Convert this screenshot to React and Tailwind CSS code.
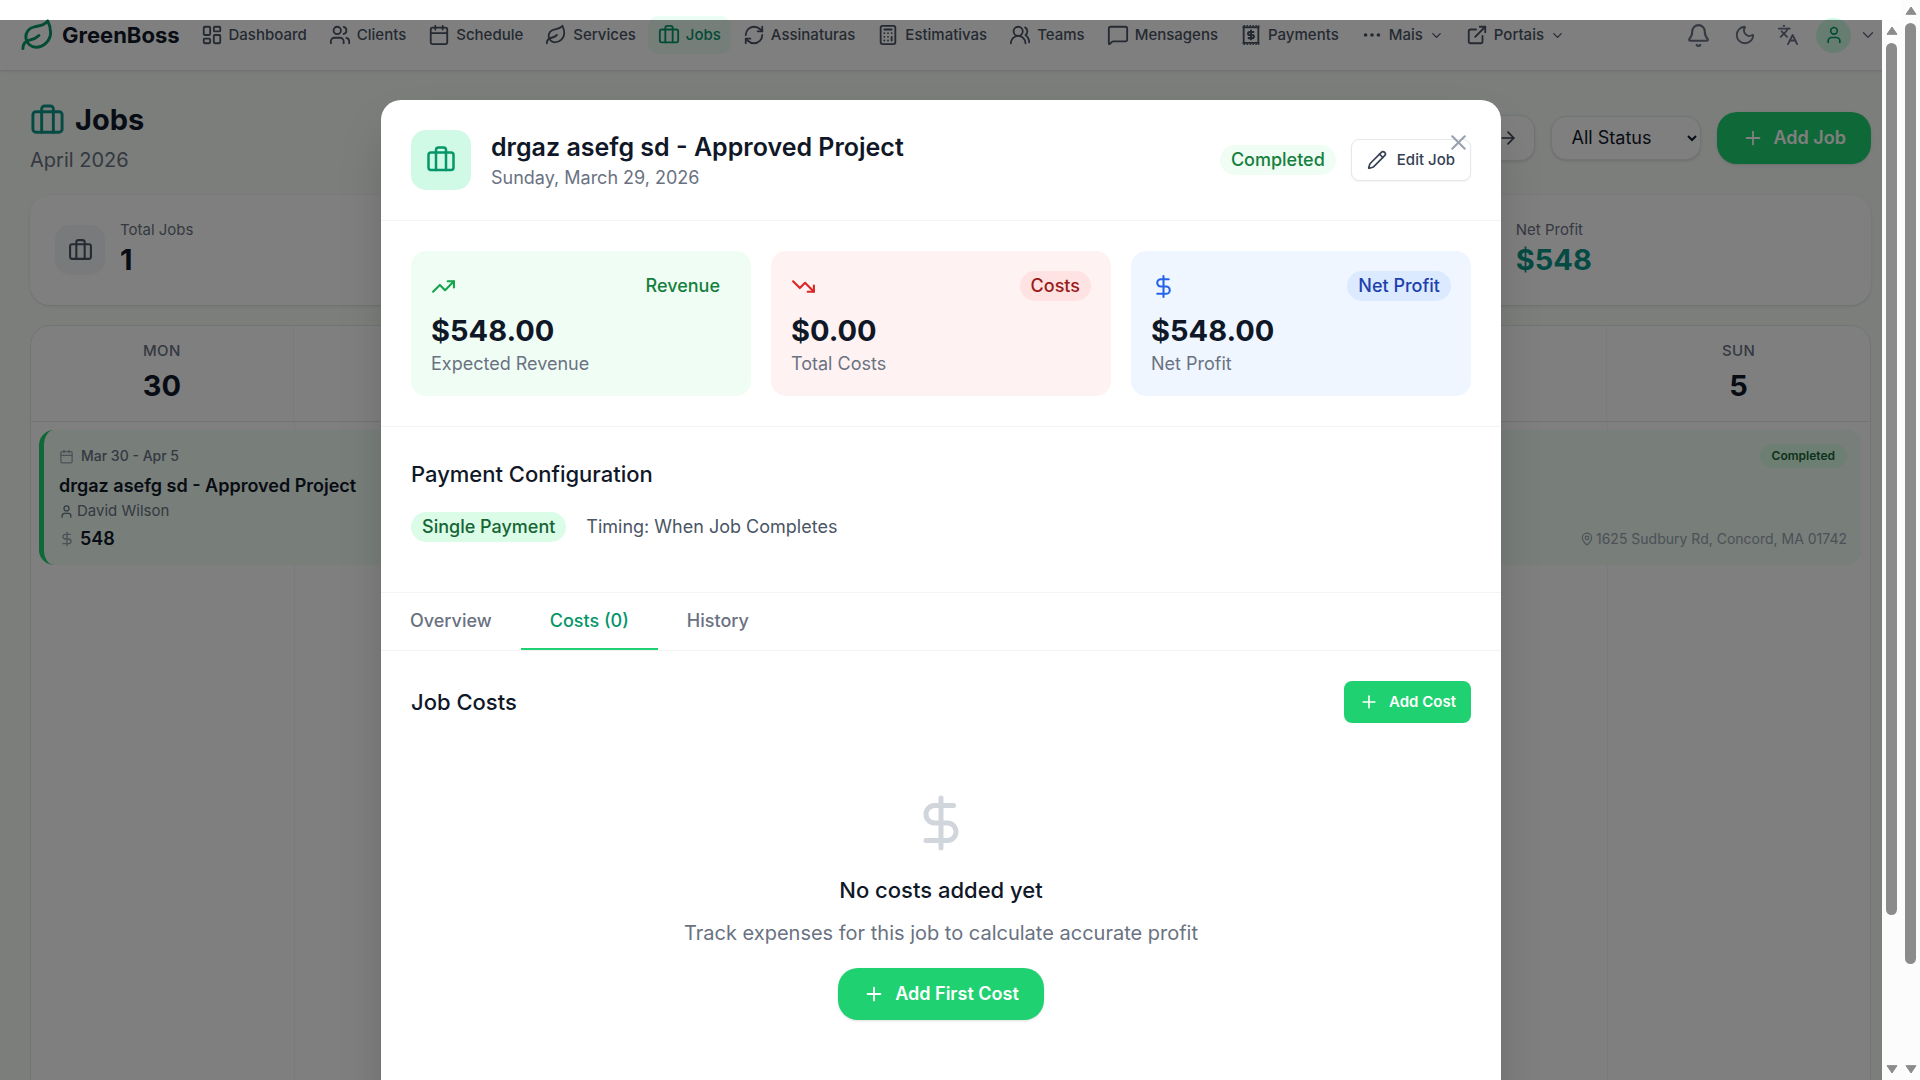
import React from 'react';
import {
	ArrowRight, Bell, Briefcase, Calculator, Calendar, ChevronDown, DollarSign, Ellipsis, ExternalLink,
	Languages, LayoutDashboard, Leaf, MapPin, MessageSquare, Moon, Pencil, Plus, RefreshCw,
	TrendingDown, TrendingUp, User, Users, UsersRound, X,
} from 'lucide-react';

// receipt with perforated top and bottom edges
function ReceiptIcon({ className }) {
	return (
		<svg viewBox="0 0 24 24" className={className} fill="none" stroke="currentColor" strokeWidth="2">
			<path d="M4 2v20M20 2v20" />
			<path d="M3 3.5h18M3 20.5h18" />
			<path d="M4 1.8h17M4 22.2h17" strokeDasharray="1.6 1.6" strokeWidth="1.6" />
			<path d="M15.5 8.6h-5a1.7 1.7 0 0 0 0 3.4h3a1.7 1.7 0 0 1 0 3.4h-5M12 6.4v11.2" strokeWidth="2.2" />
		</svg>
	);
}

const navItems = [
	{ label: 'Dashboard', icon: LayoutDashboard },
	{ label: 'Clients', icon: Users },
	{ label: 'Schedule', icon: Calendar },
	{ label: 'Services', icon: Leaf },
	{ label: 'Jobs', icon: Briefcase, active: true },
	{ label: 'Assinaturas', icon: RefreshCw },
	{ label: 'Estimativas', icon: Calculator },
	{ label: 'Teams', icon: UsersRound },
	{ label: 'Mensagens', icon: MessageSquare },
	{ label: 'Payments', icon: ReceiptIcon },
	{ label: 'Mais', icon: Ellipsis, menu: true },
	{ label: 'Portais', icon: ExternalLink, menu: true },
];

const days = [{ name: 'Mon', date: 30 }, {}, {}, {}, {}, {}, { name: 'Sun', date: 5 }];

const totals = [
	{ badge: 'Revenue', value: '$548.00', label: 'Expected Revenue', icon: TrendingUp, card: 'bg-green-50', iconColor: 'text-[#16a34a]', badgeColor: 'bg-green-50 text-[#15803d]' },
	{ badge: 'Costs', value: '$0.00', label: 'Total Costs', icon: TrendingDown, card: 'bg-red-50', iconColor: 'text-[#dc2626]', badgeColor: 'bg-red-100 text-[#991b1b]' },
	{ badge: 'Net Profit', value: '$548.00', label: 'Net Profit', icon: DollarSign, card: 'bg-blue-50', iconColor: 'text-[#2563eb]', badgeColor: 'bg-blue-100 text-[#1e40af]' },
];

const tabs = ['Overview', 'Costs (0)', 'History'];

function Badge({ className, children }) {
	return (
		<span className={`inline-flex h-7.5 items-center rounded-full px-[11px] text-lg font-medium ${className}`}>
			{children}
		</span>
	);
}

function NavLink({ item }) {
	const Icon = item.icon;
	const color = item.active ? 'bg-emerald-50 text-[#059669]' : 'text-gray-600';
	const style = `flex h-9.5 items-center gap-1.5 rounded-[10px] px-2.5 text-[15px] font-medium ${color}`;
	const content = (
		<>
			<Icon className="size-5.5" />
			{item.label}
			{item.menu && <ChevronDown className="size-[15px]" />}
		</>
	);

	if (item.menu) return <button type="button" className={style}>{content}</button>;
	return <a href="#" className={style}>{content}</a>;
}

function TopBar() {
	return (
		<header className="flex h-[70px] shrink-0 items-center gap-[11px] bg-white px-5 shadow-sm">
			<a href="#" className="flex items-center gap-[7px] text-[22px] font-bold text-gray-900">
				<Leaf className="size-[35px] text-[#059669]" />
				GreenBoss
			</a>
			<nav className="flex flex-1 items-center gap-0.5">
				{navItems.map(item => <NavLink key={item.label} item={item} />)}
			</nav>
			<div className="flex items-center gap-[5px] text-gray-500">
				<button type="button" aria-label="Notifications" className="p-2.5"><Bell className="size-[25px]" /></button>
				<button type="button" aria-label="Dark mode" className="p-2"><Moon className="size-5.5" /></button>
				<button type="button" aria-label="Language" className="p-2"><Languages className="size-5.5" /></button>
				<button type="button" aria-label="Account" className="flex items-center gap-2 p-1">
					<span className="flex size-[35px] items-center justify-center rounded-full bg-emerald-100 text-[#059669]">
						<User className="size-5" />
					</span>
					<ChevronDown className="size-[18px]" />
				</button>
			</div>
		</header>
	);
}

function PrimaryButton({ children }) {
	return (
		<button type="button" className="inline-flex h-13 items-center gap-2.5 rounded-[20px] bg-[#1fd170] px-[25px] text-lg font-semibold text-white shadow-sm">
			<Plus className="size-5.5" />
			{children}
		</button>
	);
}

function PageHeading() {
	return (
		<div className="flex items-center justify-between">
			<div>
				<h1 className="flex items-center gap-2.5 text-[29px] leading-10 font-bold text-gray-900">
					<Briefcase className="size-[35px] text-[#0d9488]" />
					Jobs
				</h1>
				<p className="mt-[5px] text-xl leading-7.5 text-gray-500">April 2026</p>
			</div>
			<div className="flex items-center gap-4">
				<button type="button" aria-label="Next week" className="flex h-11.5 w-28 items-center justify-end rounded-[15px] border border-gray-200 bg-white px-4 text-gray-700 shadow-sm">
					<ArrowRight className="size-5" />
				</button>
				<select aria-label="Status" className="h-11 w-[150px] rounded-[15px] border border-gray-200 bg-white pl-4 text-lg text-gray-900 shadow-sm">
					<option>All Status</option>
				</select>
				<PrimaryButton>Add Job</PrimaryButton>
			</div>
		</div>
	);
}

function Stat({ icon: Icon, label, value, className }) {
	return (
		<div className={`flex items-center gap-[15px] ${className}`}>
			<div className="flex size-[50px] items-center justify-center rounded-[15px] bg-gray-100 text-gray-600">
				<Icon className="size-[25px]" />
			</div>
			<div>
				<p className="text-[15px] leading-5 text-gray-500">{label}</p>
				<p className="text-[29px] leading-10 font-bold">{value}</p>
			</div>
		</div>
	);
}

function JobCard() {
	return (
		<article className="m-2 rounded-[15px] border-l-[5px] border-[#1fd170] bg-green-50 px-[15px] py-3.5">
			<div className="flex items-center justify-between">
				<p className="flex items-center gap-[7px] text-sm font-medium text-gray-500">
					<Calendar className="size-[15px] text-gray-400" />
					Mar 30 - Apr 5
				</p>
				<span className="rounded-full bg-green-100 px-3 py-0.5 text-xs leading-5 font-semibold text-[#166534]">Completed</span>
			</div>
			<h2 className="mt-[5px] text-lg leading-[25px] font-semibold text-gray-900">drgaz asefg sd - Approved Project</h2>
			<p className="mt-[3px] flex items-center gap-[3px] text-[15px] leading-5 text-gray-500">
				<User className="size-[15px]" />
				David Wilson
			</p>
			<div className="mt-[5px] flex items-center justify-between leading-[25px]">
				<p className="flex items-center gap-[5px] text-lg leading-[25px] font-semibold text-gray-900">
					<DollarSign className="size-4 text-gray-400" />
					548
				</p>
				<p className="flex items-center gap-0.5 text-sm text-gray-400">
					<MapPin className="size-3.5" />
					1625 Sudbury Rd, Concord, MA 01742
				</p>
			</div>
		</article>
	);
}

function WeekCalendar() {
	return (
		<section className="flex min-h-[800px] flex-1 flex-col rounded-[20px] border border-gray-200 bg-white">
			<div className="grid grid-cols-7 border-b border-gray-200">
				{days.map((day, i) => (
					<div key={i} className="border-r border-gray-100 p-[15px] text-center last:border-r-0">
						<p className="text-[15px] leading-5 font-medium tracking-wide text-gray-500 uppercase">{day.name}</p>
						<p className="mt-[5px] text-[29px] leading-10 font-bold text-gray-900">{day.date}</p>
					</div>
				))}
			</div>
			<div className="grid flex-1">
				<div className="col-start-1 row-start-1 grid grid-cols-7">
					{days.map((day, i) => (
						<div key={i} className="border-l border-gray-100 first:border-l-0" />
					))}
				</div>
				<div className="col-start-1 row-start-1">
					<JobCard />
				</div>
			</div>
		</section>
	);
}

function JobModal() {
	return (
		<div role="dialog" aria-label="Job details" className="relative w-full max-w-[1120px] self-start rounded-[20px] bg-white shadow-2xl">
			<div className="flex items-center gap-5 border-b border-gray-100 p-7.5">
				<div className="flex size-15 items-center justify-center rounded-[15px] bg-emerald-100">
					<Briefcase className="size-7.5 text-[#059669]" />
				</div>
				<div className="flex-1">
					<h2 className="text-[25px] leading-[35px] font-semibold text-gray-900">drgaz asefg sd - Approved Project</h2>
					<p className="text-lg leading-[25px] text-gray-500">Sunday, March 29, 2026</p>
				</div>
				<div className="flex items-center gap-[15px]">
					<Badge className="bg-green-50 text-[#15803d]">Completed</Badge>
					<button type="button" className="flex h-10.5 items-center gap-2.5 rounded-lg border border-gray-200 bg-white px-[15px] text-[15px] font-medium text-gray-700 shadow-xs">
						<Pencil className="size-5" />
						Edit Job
					</button>
				</div>
				<button type="button" aria-label="Close" className="absolute top-7.5 right-7.5 text-gray-400">
					<X className="size-[25px]" />
				</button>
			</div>

			<div className="grid grid-cols-3 gap-5 border-b border-gray-100 p-7.5">
				{totals.map(({ icon: Icon, ...total }) => (
					<div key={total.badge} className={`rounded-[15px] p-5 ${total.card}`}>
						<div className="mb-2.5 flex items-center justify-between">
							<Icon className={`size-[25px] ${total.iconColor}`} />
							<Badge className={total.badgeColor}>{total.badge}</Badge>
						</div>
						<p className="text-[29px] leading-10 font-bold text-gray-900">{total.value}</p>
						<p className="text-lg leading-[25px] text-gray-500">{total.label}</p>
					</div>
				))}
			</div>

			<div className="border-b border-gray-100 p-7.5">
				<h3 className="mb-5 text-[22px] leading-[35px] font-medium text-gray-900">Payment Configuration</h3>
				<div className="mb-5 flex items-center gap-5">
					<Badge className="bg-green-100 text-[#166534]">Single Payment</Badge>
					<span className="text-lg text-gray-600">Timing: When Job Completes</span>
				</div>
			</div>

			<div role="tablist" className="flex border-b border-gray-100">
				{tabs.map((tab, i) => (
					<button
						key={tab}
						type="button"
						role="tab"
						aria-selected={i === 1}
						className={`border-b-2 px-[29px] py-[15px] text-lg leading-[25px] font-medium ${i === 1 ? 'border-[#1fd170] text-[#059669]' : 'border-transparent text-gray-500'}`}>
						{tab}
					</button>
				))}
			</div>

			<div className="px-7.5 pt-7.5 pb-20">
				<div className="mb-7.5 flex items-center justify-between">
					<h3 className="text-[22px] leading-[35px] font-medium text-gray-900">Job Costs</h3>
					<button type="button" className="flex h-10.5 items-center gap-2.5 rounded-lg bg-[#1fd170] px-[15px] text-[15px] font-semibold text-white">
						<Plus className="size-5" />
						Add Cost
					</button>
				</div>
				<div className="py-10 text-center">
					<DollarSign className="mx-auto mb-5 size-15 text-gray-300" />
					<h4 className="mb-2.5 text-[22px] leading-[35px] font-medium text-gray-900">No costs added yet</h4>
					<p className="mb-5 text-xl leading-7.5 text-gray-500">Track expenses for this job to calculate accurate profit</p>
					<PrimaryButton>Add First Cost</PrimaryButton>
				</div>
			</div>
		</div>
	);
}

function ScrollBar({ thumb }) {
	return (
		<div aria-hidden="true" className="flex w-[19px] shrink-0 flex-col items-center gap-2 bg-[#fcfcfc] py-1.5 text-[#8b8b8b]">
			<svg viewBox="0 0 12 9" className="h-[9px] w-3 shrink-0" fill="currentColor" stroke="currentColor" strokeLinejoin="round">
				<path d="M6 1 11 8.3H1Z" />
			</svg>
			<div className="w-full flex-1">
				<div className={`mx-auto w-[11px] rounded-full bg-[#8b8b8b] ${thumb}`} />
			</div>
			<svg viewBox="0 0 12 9" className="h-[9px] w-3 shrink-0" fill="currentColor" stroke="currentColor" strokeLinejoin="round">
				<path d="M6 8 1 .7h10Z" />
			</svg>
		</div>
	);
}

export default function App() {
	return (
		<div className="flex h-screen overflow-hidden font-['Inter',sans-serif]">
			<div className="relative flex min-w-0 flex-1 flex-col overflow-hidden bg-[#f8fcf9]">
				<TopBar />
				<main className="flex flex-1 flex-col gap-5 px-7.5 pt-7.5">
					<PageHeading />
					<section className="grid grid-cols-4 gap-[70px] rounded-[20px] bg-white p-[25px] shadow-sm">
						<Stat icon={Briefcase} label="Total Jobs" value="1" className="text-gray-900" />
						<Stat icon={DollarSign} label="Net Profit" value="$548" className="col-start-4 text-[#0d9488]" />
					</section>
					<WeekCalendar />
				</main>

				<div className="absolute inset-x-0 top-5 bottom-0 flex">
					<div className="flex flex-1 justify-center overflow-hidden bg-black/50 px-5 pt-20">
						<JobModal />
					</div>
					<ScrollBar thumb="h-[86%]" />
				</div>
			</div>
			<ScrollBar thumb="h-[91%]" />
		</div>
	);
}
